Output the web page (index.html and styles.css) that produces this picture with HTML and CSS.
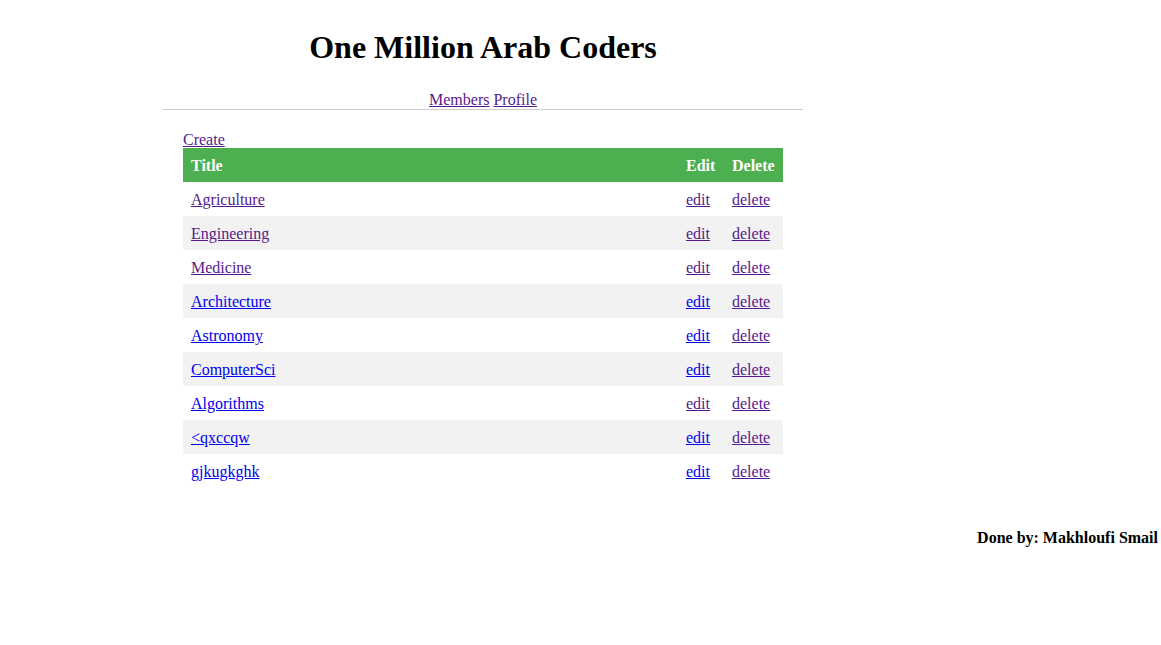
FILE: index.html
```html
<!DOCTYPE html>
<html>
<head>
<meta charset="utf-8">
<title>One Million Arab Coders</title>
<link rel="stylesheet" href="styles.css">
</head>
<body>
<div class="page">
  <header class="header">
    <h1 class="title">One Million Arab Coders</h1>
    <nav class="nav"><a class="visited" href="#">Members</a> <a class="visited" href="#">Profile</a></nav>
  </header>
  <main class="content">
    <a class="visited" href="#">Create</a>
    <table class="list">
      <thead>
        <tr><th class="col-title">Title</th><th class="col-edit">Edit</th><th class="col-delete">Delete</th></tr>
      </thead>
      <tbody>
        <tr><td><a class="visited" href="#">Agriculture</a></td><td><a class="visited" href="#">edit</a></td><td><a class="visited" href="#">delete</a></td></tr>
        <tr><td><a class="visited" href="#">Engineering</a></td><td><a class="visited" href="#">edit</a></td><td><a class="visited" href="#">delete</a></td></tr>
        <tr><td><a class="visited" href="#">Medicine</a></td><td><a class="visited" href="#">edit</a></td><td><a class="visited" href="#">delete</a></td></tr>
        <tr><td><a class="link" href="#">Architecture</a></td><td><a class="link" href="#">edit</a></td><td><a class="visited" href="#">delete</a></td></tr>
        <tr><td><a class="link" href="#">Astronomy</a></td><td><a class="link" href="#">edit</a></td><td><a class="visited" href="#">delete</a></td></tr>
        <tr><td><a class="link" href="#">ComputerSci</a></td><td><a class="link" href="#">edit</a></td><td><a class="visited" href="#">delete</a></td></tr>
        <tr><td><a class="link" href="#">Algorithms</a></td><td><a class="visited" href="#">edit</a></td><td><a class="visited" href="#">delete</a></td></tr>
        <tr><td><a class="link" href="#">&lt;qxccqw</a></td><td><a class="link" href="#">edit</a></td><td><a class="visited" href="#">delete</a></td></tr>
        <tr><td><a class="link" href="#">gjkugkghk</a></td><td><a class="link" href="#">edit</a></td><td><a class="visited" href="#">delete</a></td></tr>
      </tbody>
    </table>
  </main>
</div>
<footer class="footer">Done by: Makhloufi Smail</footer>
</body>
</html>
```
FILE: styles.css
```css
html, body {
  margin: 0;
  padding: 0;
  background: #fff;
}
body {
  font-family: "Liberation Serif", "Times New Roman", serif;
  font-size: 16px;
  color: #000;
}
.page {
  width: 640px;
  margin-left: 163px;
}
.header {
  text-align: center;
  border-bottom: 1px solid #ccc;
  padding-top: 29px;
}
.title {
  font-size: 32px;
  font-weight: bold;
  margin: 0;
  line-height: 37px;
}
.nav {
  margin-top: 25px;
  line-height: 18px;
}
a.visited { color: #551a8b; }
a.link { color: #0000ee; }
.content {
  padding: 21px 20px 0 20px;
}
.list {
  width: 600px;
  border-collapse: collapse;
  margin-top: -1px;
}
.list th, .list td {
  padding: 9px 8px 7px 8px;
  text-align: left;
  line-height: 18px;
}
.list th {
  background: #4caf50;
  color: #fff;
  font-weight: bold;
}
.list tbody tr:nth-child(even) {
  background: #f2f2f2;
}
.col-edit { width: 30px; }
.col-delete { width: 43px; }
.footer {
  text-align: right;
  font-weight: bold;
  padding-right: 3px;
  margin-top: 41px;
  line-height: 18px;
}
```
